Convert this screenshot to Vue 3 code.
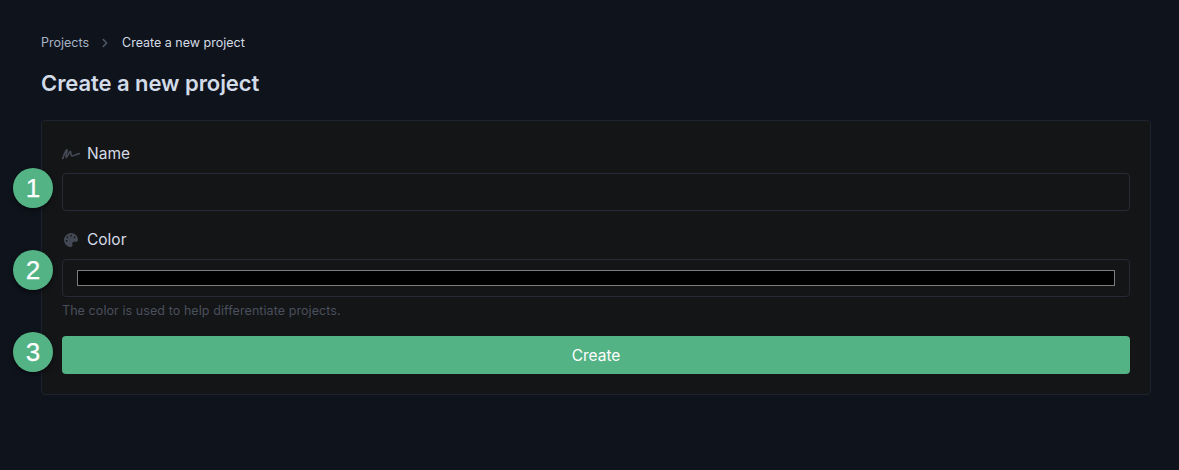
<template>
  <div class="page">
    <nav class="crumbs">
      <a class="crumb-link">Projects</a>
      <svg class="crumb-sep" viewBox="0 0 320 512" width="8" height="10">
        <path fill="currentColor" d="M285.5 273L91.1 467.3c-9.4 9.4-24.6 9.4-33.9 0l-22.7-22.7c-9.4-9.4-9.4-24.5 0-33.9L188.5 256 34.5 101.3c-9.3-9.4-9.3-24.5 0-33.9l22.7-22.7c9.4-9.4 24.6-9.4 33.9 0L285.5 239c9.4 9.4 9.4 24.6 0 34z" />
      </svg>
      <span class="crumb-current">Create a new project</span>
    </nav>

    <h1 class="title">Create a new project</h1>

    <form class="card" @submit.prevent>
      <div class="field">
        <label class="label">
          <svg class="label-icon" viewBox="0 0 18 12" width="18" height="12">
            <path fill="none" stroke="currentColor" stroke-width="1.7" stroke-linecap="round" stroke-linejoin="round" d="M.8 10.500C1.800 7.500 3.300 2.400 4.800 1.800 5.800 1.500 3.200 8.800 4.200 9.300 5.200 9.700 7.300 3.400 8.300 3.400 9.200 3.500 8.600 7.700 9.700 8 11.200 8.300 14.300 6.200 17.200 5.600" />
          </svg>
          <span>Name</span>
        </label>
        <input class="input" type="text" />
      </div>

      <div class="field">
        <label class="label">
          <svg class="label-icon palette" viewBox="0 0 512 512" width="14" height="14">
            <path fill="currentColor" d="M204.300 5C104.900 24.400 24.800 104.300 5.200 203.400c-37 187 131.700 326.400 258.800 306.700 41.200-6.400 61.400-54.600 42.500-91.700-23.100-45.400 9.900-98.400 60.900-98.400h79.700c35.800 0 64.800-29.600 64.900-65.300C511.500 97.100 368.100-26.900 204.300 5zM96 320c-17.700 0-32-14.300-32-32s14.300-32 32-32 32 14.300 32 32-14.300 32-32 32zm32-128c-17.700 0-32-14.300-32-32s14.300-32 32-32 32 14.300 32 32-14.300 32-32 32zm128-64c-17.700 0-32-14.300-32-32s14.300-32 32-32 32 14.300 32 32-14.300 32-32 32zm128 64c-17.700 0-32-14.300-32-32s14.300-32 32-32 32 14.300 32 32-14.300 32-32 32z" />
          </svg>
          <span>Color</span>
        </label>
        <div class="color-input">
          <div class="swatch"></div>
        </div>
        <p class="help">The color is used to help differentiate projects.</p>
      </div>

      <button class="submit" type="submit">Create</button>

      <span class="step step-1">1</span>
      <span class="step step-2">2</span>
      <span class="step step-3">3</span>
    </form>
  </div>
</template>

<script setup>
</script>

<style>
html,
body {
  margin: 0;
  background: #0f131c;
}
</style>

<style scoped>
.page {
  box-sizing: border-box;
  width: 1179px;
  height: 470px;
  padding: 35px 28px 0 41px;
  background: #0f131c;
  font-family: Inter, "Liberation Sans", sans-serif;
  overflow: hidden;
}

.crumbs {
  display: flex;
  align-items: center;
  height: 15px;
  font-size: 12.5px;
  line-height: 15px;
}

.crumb-link {
  color: #a8b3c4;
}

.crumb-sep {
  margin: 0 13px 0 12px;
  color: #4b5563;
}

.crumb-current {
  color: #d5dce6;
}

.title {
  margin: 17px 0 0;
  color: #d2dbe7;
  font-size: 22px;
  line-height: 32px;
  font-weight: 600;
  letter-spacing: -0.06px;
}

.card {
  position: relative;
  box-sizing: border-box;
  width: 1110px;
  height: 275px;
  margin-top: 21px;
  padding: 20px;
  background: #141517;
  border: 1px solid #1e2330;
  border-radius: 4px;
}

.field {
  margin-bottom: 16px;
}

.field:nth-child(2) {
  margin-bottom: 17px;
}

.label {
  display: flex;
  align-items: center;
  box-sizing: border-box;
  height: 24px;
  margin-bottom: 8px;
  padding-top: 2px;
  color: #d5dce6;
  font-size: 15.5px;
  font-weight: 400;
  line-height: 20px;
}

.label-icon {
  flex: none;
  width: 18px;
  margin-right: 7px;
  color: #434854;
}

.palette {
  width: 14px;
  margin-left: 2px;
  margin-right: 9px;
}

.input,
.color-input {
  display: block;
  box-sizing: border-box;
  width: 100%;
  height: 38px;
  background: transparent;
  border: 1px solid #262a38;
  border-radius: 4px;
  outline: none;
}

.color-input {
  display: flex;
  align-items: center;
  padding: 0 14px;
}

.swatch {
  box-sizing: border-box;
  width: 100%;
  height: 16px;
  background: #000;
  border: 1px solid #7d7d7d;
}

.help {
  margin: 6px 0 0;
  color: #4a4f5c;
  font-size: 12.5px;
  line-height: 16px;
  letter-spacing: 0.08px;
}

.submit {
  display: block;
  width: 100%;
  height: 38px;
  padding: 0;
  background: #54b385;
  border: none;
  border-radius: 4px;
  color: #fff;
  font-family: inherit;
  font-size: 15.5px;
  font-weight: 400;
}

.step {
  position: absolute;
  left: -29px;
  display: flex;
  align-items: center;
  justify-content: center;
  width: 40px;
  height: 40px;
  background: #54b385;
  border-radius: 50%;
  box-shadow: 0 2px 5px rgba(0, 0, 0, 0.55);
  color: #fff;
  font-family: "Liberation Sans", Arial, sans-serif;
  font-size: 26px;
  line-height: 1;
  -webkit-text-stroke: 0.25px #fff;
}

.step-1 {
  top: 47px;
}

.step-2 {
  top: 129px;
}

.step-3 {
  top: 211px;
}
</style>
